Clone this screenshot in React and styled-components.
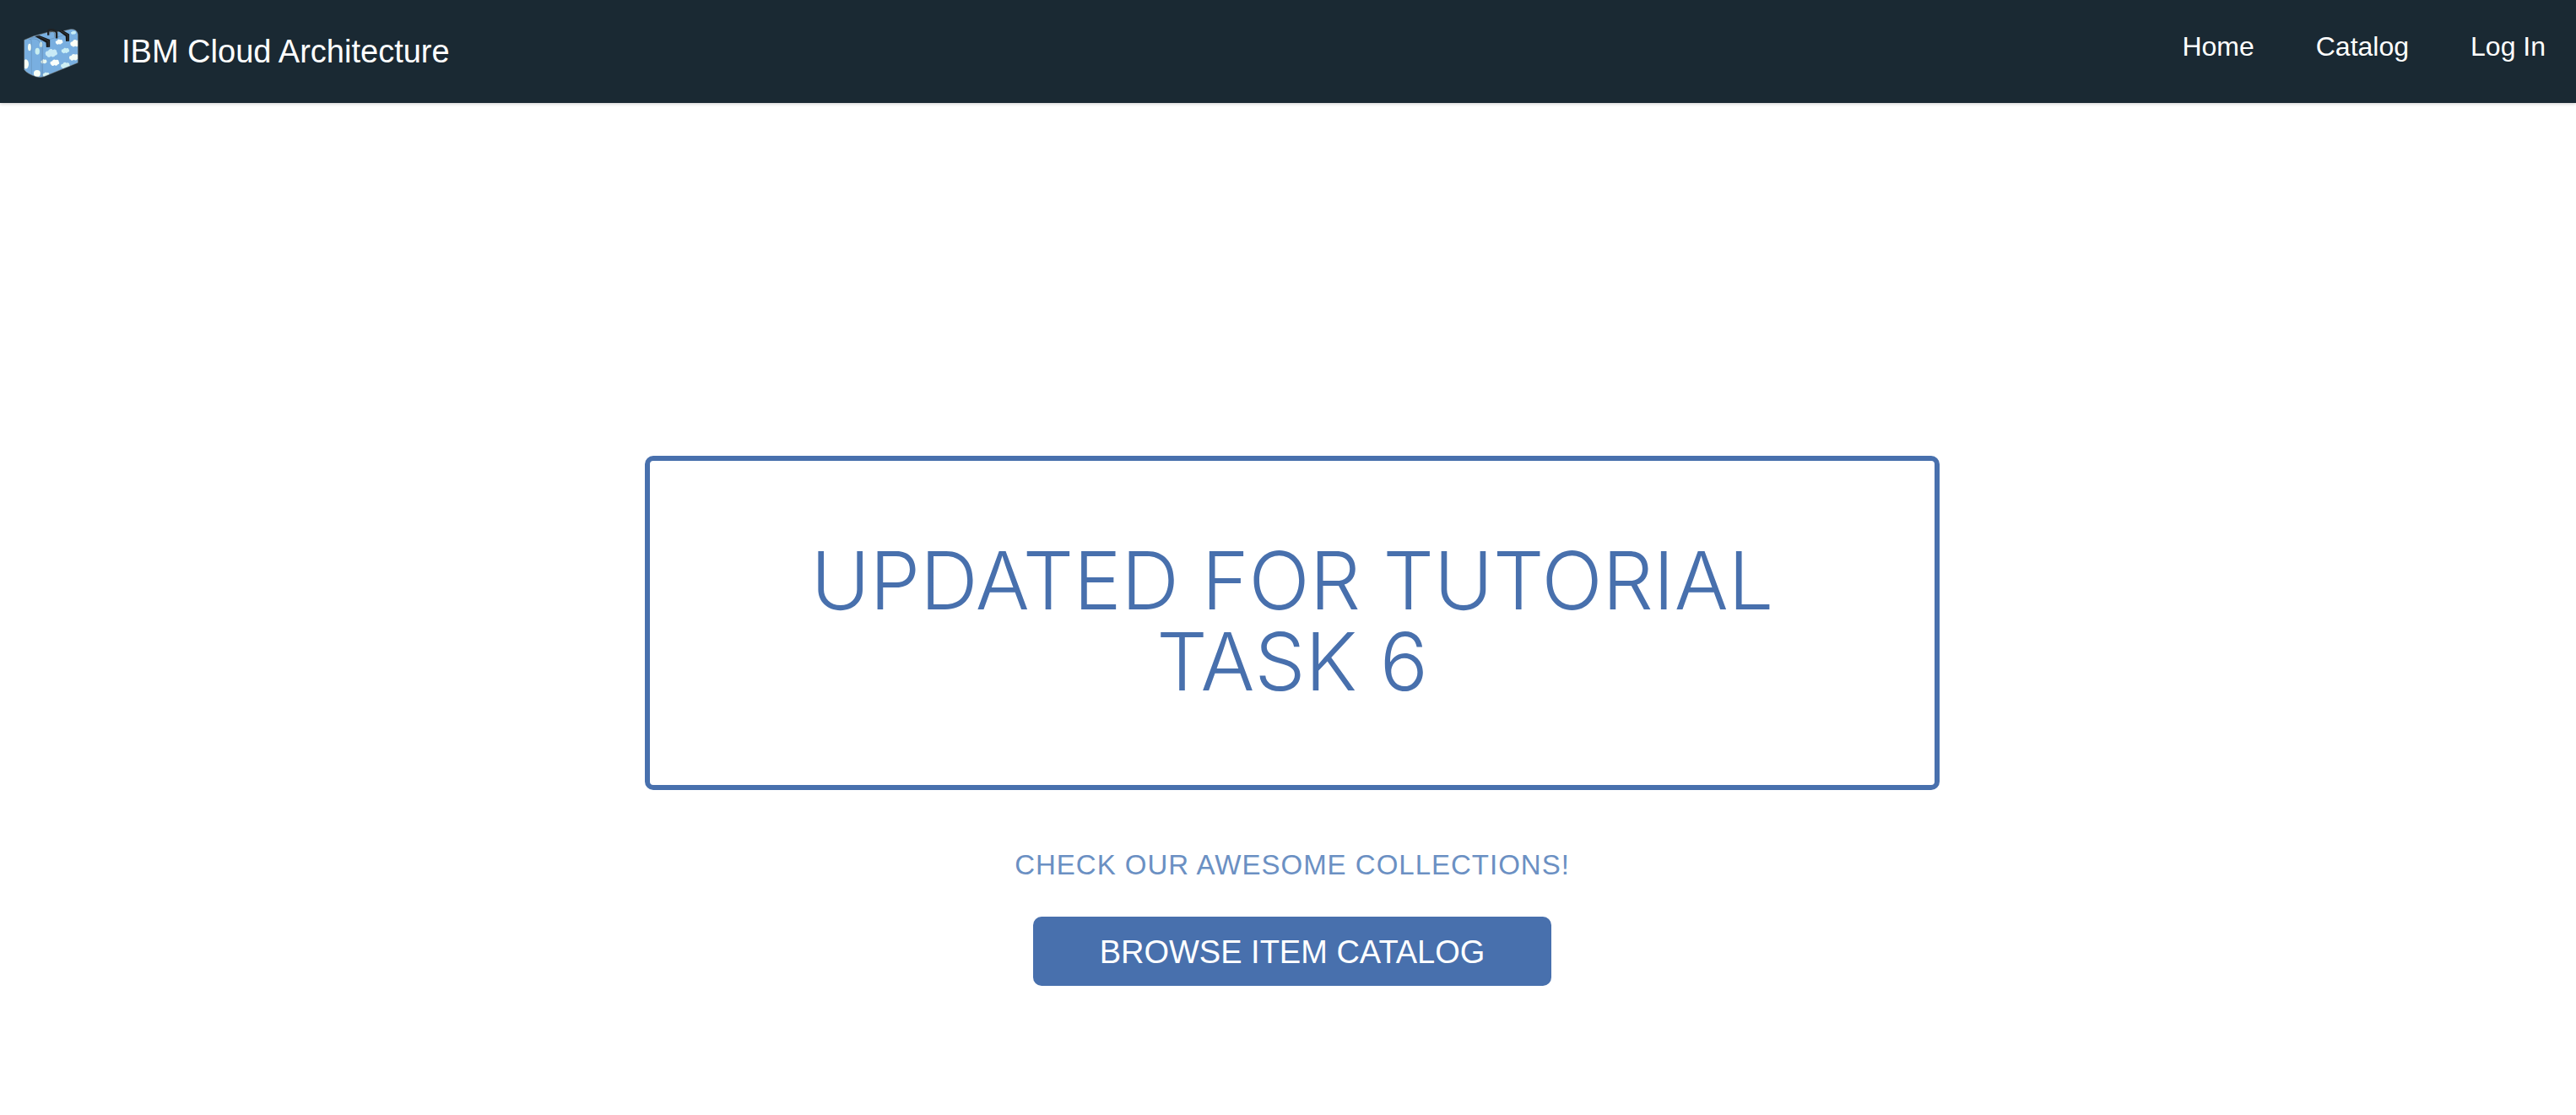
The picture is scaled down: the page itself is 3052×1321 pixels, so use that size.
import React from "react";
import styled, { createGlobalStyle } from "styled-components";

const colors = {
  bar: "#1a2933",
  brand: "#4870ad",
  soft: "#6b90c3",
  page: "#fff",
};

const GlobalStyle = createGlobalStyle`
  *, *::before, *::after { box-sizing: border-box; }
  body {
    margin: 0;
    background: ${colors.page};
    font-family: "Liberation Sans", Arial, Helvetica, sans-serif;
  }
`;

const Header = styled.header`
  display: flex;
  align-items: center;
  justify-content: space-between;
  height: 122px;
  padding: 0 36px 0 28px;
  background: ${colors.bar};
  box-shadow: 0 1px 4px rgba(0, 0, 0, 0.2);
`;

const Brand = styled.a`
  display: flex;
  align-items: center;
  gap: 51px;
  color: #fff;
  font-size: 38px;
  line-height: 48px;
  text-decoration: none;
`;

const Logo = styled.svg`
  display: block;
  width: 65px;
  height: 62px;
  padding-top: 4px;
`;

const Nav = styled.nav`
  display: flex;
  gap: 73px;
  padding-bottom: 12px;
`;

const NavLink = styled.a`
  color: #fff;
  font-size: 32px;
  line-height: 40px;
  text-decoration: none;
`;

const Main = styled.main`
  display: flex;
  justify-content: center;
  padding: 418px 0 120px 10px;
`;

const Hero = styled.section`
  display: flex;
  flex-direction: column;
  align-items: center;
  width: 100%;
  max-width: 1534px;
`;

const Headline = styled.h1`
  width: 100%;
  margin: 0;
  padding: 94px 96px 98px;
  border: 6px solid ${colors.brand};
  border-radius: 10px;
  color: ${colors.brand};
  font: 300 95px/96px Inter, "Liberation Sans", sans-serif;
  text-align: center;
  text-transform: uppercase;
`;

const Tagline = styled.p`
  margin: 69px 0 41px;
  color: ${colors.soft};
  font-size: 33px;
  line-height: 40px;
  letter-spacing: 1px;
  text-transform: uppercase;
`;

const BrowseButton = styled.button`
  width: 40%;
  padding: 18px 0 16px;
  border: 0;
  border-radius: 10px;
  background: ${colors.brand};
  color: #fff;
  font-family: inherit;
  font-size: 38px;
  line-height: 48px;
  text-transform: uppercase;
  white-space: nowrap;
  cursor: pointer;
`;

const clouds = [
  { x: 117, y: 111, s: 21, tint: "#c9eaf6" },
  { x: 145, y: 71, s: 13, tint: "#f6fdfb" },
  { x: 167, y: 102, s: 14, tint: "#c9eef6" },
  { x: 129, y: 145, s: 16, tint: "#fbfffb" },
  { x: 90, y: 141, s: 11, tint: "#e8f7f0" },
  { x: 167, y: 155, s: 16, tint: "#cdeef3" },
  { x: 203, y: 76, s: 18, tint: "#fdfff6" },
  { x: 198, y: 126, s: 17, tint: "#f2fbf6" },
  { x: 196, y: 38, s: 9, tint: "#c9eef6" },
  { x: 98, y: 188, s: 12, tint: "#d9f3f3" },
];

const sideClouds = [
  { x: 39, y: 90, tint: "#f2fbf3", rx: 6, ry: 13 },
  { x: 67, y: 104, tint: "#c9eef0", rx: 8, ry: 12 },
  { x: 80, y: 80, tint: "#dff4ee", rx: 5, ry: 10 },
  { x: 26, y: 150, tint: "#f8fff6", rx: 10, ry: 17 },
  { x: 66, y: 183, tint: "#f8fff6", rx: 12, ry: 12 },
];

const CASE_OUTLINE =
  "M20 64L54 50L105 36L150 34L188 25Q208 25 212 44V145L90 195Q76 200 62 195Q30 184 20 170Z";

function Cloud({ x, y, s, tint }) {
  return (
    <g transform={`translate(${x} ${y}) scale(${s / 20})`} fill={tint}>
      <path d="M-19 5C-23-2-17-8-11-7C-9-15 1-17 5-11C12-16 20-10 18-4C23 0 20 8 13 8C10 14 2 14-1 10C-6 16-14 14-14 9C-17 10-19 8-19 5Z" />
    </g>
  );
}

function Suitcase() {
  return (
    <Logo viewBox="18 24 196 174" role="img" aria-label="Cloud suitcase">
      <defs>
        <clipPath id="case">
          <path d={CASE_OUTLINE} />
        </clipPath>
      </defs>
      <g clipPath="url(#case)">
        <path fill="#79afe0" d="M18 20H214V200H18Z" />
        {clouds.map((c) => (
          <Cloud key={`${c.x}-${c.y}`} {...c} />
        ))}
        {sideClouds.map((c) => (
          <ellipse key={`${c.x}-${c.y}`} cx={c.x} cy={c.y} rx={c.rx} ry={c.ry} fill={c.tint} />
        ))}
        <g fill="none" stroke="#5f83a8" strokeWidth="1.5">
          <path d="M42 60Q46 64 46 74V188" />
          <path d="M36 62Q60 56 72 66Q82 76 81 92V197" />
          <path d="M44 56Q70 52 79 62Q87 72 86 92V196" />
          <path d="M110 62L178 42" />
        </g>
      </g>
      <path fill="none" stroke="#8a8d8c" strokeWidth="1.5" d={CASE_OUTLINE} />
      <path fill="#17191b" d="M58 51L74 48L112 63V89L99 90L98 73Z" />
      <path fill="#17191b" d="M143 32L156 28L181 43V68L169 69L168 51Z" />
      <path fill="none" stroke="#45484a" strokeWidth="2" d="M68 50L106 66V88M150 31L176 46V67" />
      <path fill="none" stroke="#202224" strokeWidth="7" d="M106 47V32Q107 27 113 27L125 28Q136 32 136 40V58" />
      <path fill="none" stroke="#6f7273" strokeWidth="2" d="M111 44V33Q122 30 129 39V54" />
    </Logo>
  );
}

export default function App() {
  return (
    <>
      <GlobalStyle />
      <Header>
        <Brand href="#home">
          <Suitcase />
          IBM Cloud Architecture
        </Brand>
        <Nav aria-label="Main">
          <NavLink href="#home">Home</NavLink>
          <NavLink href="#catalog">Catalog</NavLink>
          <NavLink href="#login">Log In</NavLink>
        </Nav>
      </Header>
      <Main>
        <Hero>
          <Headline>Updated for Tutorial Task 6</Headline>
          <Tagline>Check our awesome collections!</Tagline>
          <BrowseButton type="button">Browse Item Catalog</BrowseButton>
        </Hero>
      </Main>
    </>
  );
}
